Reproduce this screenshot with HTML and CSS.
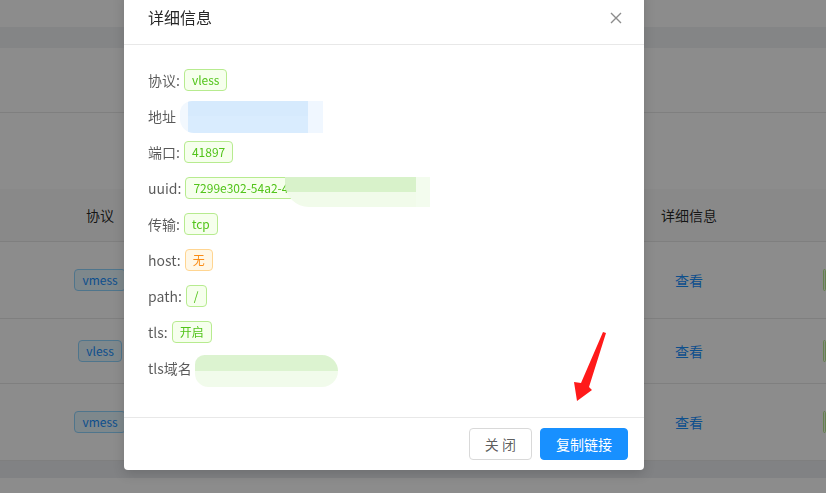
FILE: index.html
```html
<!DOCTYPE html>
<html lang="zh-CN">
<head>
<meta charset="utf-8">
<title>详细信息</title>
<link rel="stylesheet" href="styles.css">
</head>
<body>
<div class="page">
  <div class="strip strip-top"></div>
  <div class="strip strip-band"></div>
  <div class="strip strip-a"></div>
  <div class="strip strip-b"></div>
  <div class="trow thead">
    <div class="cell">协议</div>
    <div class="cell"></div>
    <div class="cell">详细信息</div>
    <div class="cell"></div>
  </div>
  <div class="trow r1">
    <div class="cell"><span class="btag">vmess</span></div>
    <div class="cell"></div>
    <div class="cell"><span class="link">查看</span></div>
    <div class="cell edge"><span class="gtag"></span></div>
  </div>
  <div class="trow r2">
    <div class="cell"><span class="btag">vless</span></div>
    <div class="cell"></div>
    <div class="cell"><span class="link">查看</span></div>
    <div class="cell edge"><span class="gtag"></span></div>
  </div>
  <div class="trow r3">
    <div class="cell"><span class="btag">vmess</span></div>
    <div class="cell"></div>
    <div class="cell"><span class="link">查看</span></div>
    <div class="cell edge"><span class="gtag"></span></div>
  </div>
  <div class="strip strip-foot"></div>
</div>

<div class="mask"></div>

<div class="modal">
  <div class="modal-header">
    <div class="modal-title">详细信息</div>
    <span class="modal-close">
      <svg width="12" height="12" viewBox="0 0 12 12"><path d="M1 1 L11 11 M11 1 L1 11" stroke="#8c8c8c" stroke-width="1.4" fill="none"/></svg>
    </span>
  </div>
  <div class="modal-body">
    <div class="item"><span class="label">协议:</span><span class="tag green">vless</span></div>
    <div class="item"><span class="label">地址</span><span class="blur blur-blue"></span></div>
    <div class="item"><span class="label">端口:</span><span class="tag green">41897</span></div>
    <div class="item"><span class="label">uuid:</span><span class="tag green">7299e302-54a2-4</span><span class="blur blur-uuid"></span></div>
    <div class="item"><span class="label">传输:</span><span class="tag green">tcp</span></div>
    <div class="item"><span class="label">host:</span><span class="tag orange">无</span></div>
    <div class="item"><span class="label">path:</span><span class="tag green">/</span></div>
    <div class="item"><span class="label">tls:</span><span class="tag green">开启</span></div>
    <div class="item"><span class="label">tls域名</span><span class="blur blur-sni"></span></div>
  </div>
  <div class="modal-footer">
    <button class="btn">关 闭</button>
    <button class="btn primary">复制链接</button>
  </div>
</div>

<svg class="arrow" width="40" height="78" viewBox="0 0 40 78">
  <polygon points="33,4 36,5 19,59 22,62 7,73 4,54 11,55" fill="#ff1a1a"/>
</svg>
</body>
</html>
```

FILE: styles.css
```css
* { box-sizing: border-box; }
html, body { margin: 0; padding: 0; }
body {
  width: 826px;
  height: 493px;
  overflow: hidden;
  font-family: "Noto Sans CJK SC", "Noto Sans", sans-serif;
  font-size: 14px;
  background: #ffffff;
  position: relative;
}
.page { display: flex; flex-direction: column; }
.strip-top { height: 27px; background: #fff; }
.strip-band { height: 21px; background: #f0f2f5; }
.strip-a { height: 65px; background: #fff; border-bottom: 1px solid #e8e8e8; }
.strip-b { height: 76px; background: #fff; }
.trow {
  display: grid;
  grid-template-columns: 200px 378px 222px 26px;
  border-bottom: 1px solid #e8e8e8;
  background: #fff;
}
.thead { height: 53px; background: #fafafa; color: rgba(0,0,0,.85); }
.r1 { height: 77px; }
.r2 { height: 65px; }
.r3 { height: 77px; }
.cell { display: flex; align-items: center; justify-content: center; }
.cell.edge { justify-content: flex-start; padding-left: 23px; }
.btag {
  font-size: 12px; line-height: 20px; padding: 0 7px;
  border: 1px solid #91d5ff; background: #e6f7ff; color: #1890ff;
  border-radius: 4px;
}
.gtag {
  display: block; width: 30px; height: 22px;
  border: 1px solid #b7eb8f; background: #f6ffed;
  border-radius: 4px;
}
.link { color: #1890ff; }
.strip-foot { height: 17px; background: #ebedf0; }

.mask {
  position: fixed; inset: 0;
  background: rgba(0,0,0,.45);
}
.modal {
  position: absolute;
  left: 124px; top: -10px;
  width: 520px;
  background: #fff;
  border-radius: 4px;
  box-shadow: 0 4px 12px rgba(0,0,0,.15);
}
.modal-header {
  position: relative;
  padding: 16px 24px;
  border-bottom: 1px solid #e8e8e8;
}
.modal-title {
  font-size: 16px; line-height: 22px; font-weight: 400;
  color: rgba(0,0,0,.85);
}
.modal-close {
  position: absolute; right: 0; top: 0;
  width: 56px; height: 56px;
  display: flex; align-items: center; justify-content: center;
}
.modal-body { padding: 24px; }
.item {
  position: relative;
  display: flex; align-items: center;
  height: 22px; margin-bottom: 14px;
  color: rgba(0,0,0,.65);
}
.label { margin-right: 4px; }
.tag {
  display: inline-block;
  font-size: 12px; line-height: 20px; padding: 0 7px;
  border-radius: 4px; border: 1px solid;
}
.tag.green { color: #52c41a; background: #f6ffed; border-color: #b7eb8f; }
.tag.orange { color: #fa8c16; background: #fff7e6; border-color: #ffd591; }

.blur { position: absolute; }
.blur-blue {
  left: 32px; top: -4px; width: 143px; height: 32px;
  border-radius: 12px 0 0 14px;
  background:
    linear-gradient(90deg, #f2f8fe 0, #f2f8fe 8px, rgba(255,255,255,0) 8px, rgba(255,255,255,0) 128px, #f0f7ff 128px),
    linear-gradient(180deg, #d6eafd 0, #d6eafd 15px, #d9ecfe 15px);
}
.blur-uuid {
  left: 137px; top: 0; width: 145px; height: 30px;
  border-radius: 0 0 0 24px;
  background:
    linear-gradient(90deg, rgba(255,255,255,0) 0, rgba(255,255,255,0) 131px, #f3fcee 131px),
    linear-gradient(180deg, #d8f2ca 0, #d8f2ca 15px, #f1fbea 15px);
}
.blur-sni {
  left: 47px; top: -2px; width: 143px; height: 32px;
  background: linear-gradient(180deg, #dcf3d0 0, #dcf3d0 16px, #f1fbeb 16px);
  border-radius: 14px 24px 24px 20px;
}

.modal-footer {
  display: flex; justify-content: flex-end; gap: 8px;
  padding: 10px 16px;
  border-top: 1px solid #e8e8e8;
}
.btn {
  height: 32px; padding: 0 15px;
  font-family: inherit; font-size: 14px;
  border-radius: 4px;
  border: 1px solid #d9d9d9; background: #fff;
  color: rgba(0,0,0,.65);
}
.btn.primary { background: #1890ff; border-color: #1890ff; color: #fff; }

.arrow { position: absolute; left: 570px; top: 328px; }
```
